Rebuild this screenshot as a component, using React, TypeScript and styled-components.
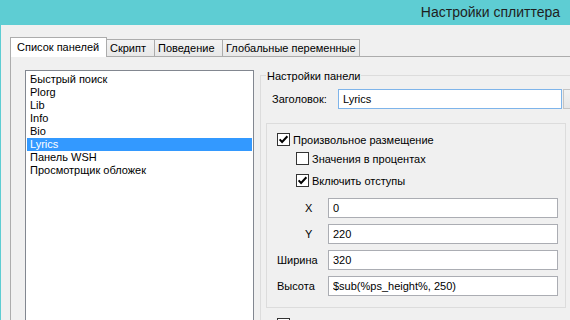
import React from 'react';
import styled, { createGlobalStyle } from 'styled-components';

const GlobalStyle = createGlobalStyle`
  html, body {
    margin: 0;
    padding: 0;
    background: #f0f0f0;
  }
  body {
    font-family: "Liberation Sans", Arial, sans-serif;
    font-size: 11px;
    color: #000;
  }
`;

const Window = styled.div`
  width: 570px;
  height: 320px;
  overflow: hidden;
  background: #5ecdd3;
  display: flex;
  flex-direction: column;
`;

const TitleBar = styled.div`
  height: 25px;
  flex: none;
  display: flex;
  align-items: center;
  justify-content: flex-end;
  padding: 0 10px 2px 0;
  box-sizing: border-box;
`;

const Title = styled.span`
  font-size: 14px;
  color: #1e1e1e;
  white-space: nowrap;
`;

const Client = styled.div`
  flex: 1;
  margin-left: 1px;
  background: #f0f0f0;
  padding: 12px 0 0 9px;
  display: flex;
  flex-direction: column;
  min-height: 0;
`;

const TabStrip = styled.div`
  display: flex;
  align-items: flex-end;
  height: 19px;
  flex: none;
`;

const Tab = styled.div<{ $active?: boolean; $w: number }>`
  box-sizing: border-box;
  width: ${p => p.$w}px;
  height: ${p => (p.$active ? 20 : 17)}px;
  margin-bottom: ${p => (p.$active ? -1 : 0)}px;
  position: relative;
  z-index: ${p => (p.$active ? 1 : 0)};
  border: 1px solid #acacac;
  border-bottom: none;
  border-left-width: ${p => (p.$active ? 1 : 0)}px;
  background: ${p => (p.$active ? '#ffffff' : 'linear-gradient(#f3f3f3, #e8e8e8)')};
  padding: ${p => (p.$active ? '3px 0 0 6px' : '2px 0 0 3px')};
  white-space: nowrap;
  line-height: 13px;
`;

const TabPage = styled.div`
  flex: 1;
  border-top: 1px solid #acacac;
  border-left: 1px solid #acacac;
  background: #f0f0f0;
  padding: 13px 0 0 14px;
  display: flex;
  align-items: flex-start;
  overflow: hidden;
`;

const ListBox = styled.div`
  width: 229px;
  height: 280px;
  flex: none;
  box-sizing: border-box;
  border: 1px solid #828790;
  background: #fff;
  padding: 2px 1px 1px 1px;
`;

const ListItem = styled.div<{ $selected?: boolean }>`
  height: 13px;
  line-height: 13px;
  padding-left: 3px;
  white-space: nowrap;
  background: ${p => (p.$selected ? '#3399ff' : 'transparent')};
  color: ${p => (p.$selected ? '#fff' : '#000')};
`;

const GroupBox = styled.div`
  width: 330px;
  height: 280px;
  flex: none;
  margin: 5px 0 0 6px;
  border: 1px solid #dcdcdc;
  padding-left: 5px;
  box-sizing: border-box;
`;

const Caption = styled.div`
  width: fit-content;
  margin-top: -7px;
  padding: 0 1px;
  line-height: 14px;
  background: #f0f0f0;
  white-space: nowrap;
`;

const TitleRow = styled.div`
  display: flex;
  align-items: center;
  margin-top: 6px;
  padding-left: 6px;
`;

const FieldRow = styled.div<{ $top: number }>`
  display: flex;
  align-items: center;
  margin-top: ${p => p.$top}px;
`;

const FieldLabel = styled.div<{ $w: number; $indent?: number }>`
  width: ${p => p.$w}px;
  flex: none;
  box-sizing: border-box;
  padding-left: ${p => p.$indent ?? 0}px;
  padding-bottom: 1px;
  white-space: nowrap;
`;

const TextInput = styled.input<{ $w: number; $focused?: boolean }>`
  box-sizing: border-box;
  width: ${p => p.$w}px;
  height: 20px;
  flex: none;
  margin: 0;
  padding: 0 4px;
  border: 1px solid ${p => (p.$focused ? '#7eb4ea' : '#abadb3')};
  border-radius: 0;
  background: #fff;
  font-family: "Liberation Sans", Arial, sans-serif;
  font-size: 11px;
  color: #000;
  outline: none;
`;

const SideButton = styled.div`
  box-sizing: border-box;
  width: 75px;
  height: 20px;
  flex: none;
  margin-left: 1px;
  border: 1px solid #c4c4c4;
  background: linear-gradient(#f2f2f2, #e6e6e6);
`;

const Frame = styled.div`
  width: 300px;
  box-sizing: border-box;
  margin: 14px 0 0 0;
  border: 1px solid #dcdcdc;
  padding: 0 0 11px 10px;
`;

const CheckRow = styled.div<{ $top: number; $indent?: number }>`
  display: flex;
  align-items: center;
  height: 13px;
  margin-top: ${p => p.$top}px;
  margin-left: ${p => p.$indent ?? 0}px;
`;

const Box = styled.span`
  box-sizing: border-box;
  width: 13px;
  height: 13px;
  flex: none;
  border: 1px solid #333;
  background: #fff;
  display: flex;
  align-items: center;
  justify-content: center;

  & svg {
    display: block;
  }
`;

const CheckLabel = styled.span`
  margin-left: 3px;
  white-space: nowrap;
`;

const CheckBox = ({ checked }: { checked?: boolean }) => (
  <Box>
    {checked && (
      <svg width="11" height="11" viewBox="0 0 11 11">
        <path d="M1.6 5.4L4.1 8L9.4 2.3" stroke="#000" strokeWidth="2" fill="none" strokeLinejoin="miter" />
      </svg>
    )}
  </Box>
);

const panels = ['Быстрый поиск', 'Plorg', 'Lib', 'Info', 'Bio', 'Lyrics', 'Панель WSH', 'Просмотрщик обложек'];

const fields = [
  { label: 'X', indent: 28, value: '0', top: 11 },
  { label: 'Y', indent: 28, value: '220', top: 6 },
  { label: 'Ширина', indent: 0, value: '320', top: 6 },
  { label: 'Высота', indent: 0, value: '$sub(%ps_height%, 250)', top: 6 },
];

const App = () => {
  return (
    <>
      <GlobalStyle />
      <Window>
        <TitleBar>
          <Title>Настройки сплиттера</Title>
        </TitleBar>
        <Client>
          <TabStrip>
            <Tab $active $w={97}>Список панелей</Tab>
            <Tab $w={48}>Скрипт</Tab>
            <Tab $w={68}>Поведение</Tab>
            <Tab $w={137}>Глобальные переменные</Tab>
          </TabStrip>
          <TabPage>
            <ListBox>
              {panels.map(name => (
                <ListItem key={name} $selected={name === 'Lyrics'}>{name}</ListItem>
              ))}
            </ListBox>
            <GroupBox>
              <Caption>Настройки панели</Caption>
              <TitleRow>
                <FieldLabel $w={66}>Заголовок:</FieldLabel>
                <TextInput $w={224} $focused readOnly value="Lyrics" />
                <SideButton />
              </TitleRow>
              <Frame>
                <CheckRow $top={9}>
                  <CheckBox checked />
                  <CheckLabel>Произвольное размещение</CheckLabel>
                </CheckRow>
                <CheckRow $top={6} $indent={19}>
                  <CheckBox />
                  <CheckLabel>Значения в процентах</CheckLabel>
                </CheckRow>
                <CheckRow $top={9} $indent={19}>
                  <CheckBox checked />
                  <CheckLabel>Включить отступы</CheckLabel>
                </CheckRow>
                {fields.map(f => (
                  <FieldRow key={f.label} $top={f.top}>
                    <FieldLabel $w={51} $indent={f.indent}>{f.label}</FieldLabel>
                    <TextInput $w={230} readOnly value={f.value} />
                  </FieldRow>
                ))}
              </Frame>
              <CheckRow $top={10} $indent={11}>
                <CheckBox />
              </CheckRow>
            </GroupBox>
          </TabPage>
        </Client>
      </Window>
    </>
  );
};

export default App;
